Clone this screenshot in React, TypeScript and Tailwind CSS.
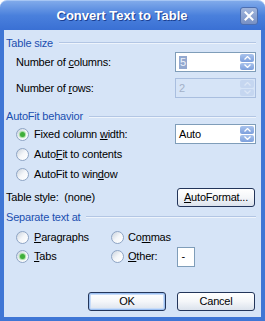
import React from 'react';

const U: React.FC<{ children: React.ReactNode }> = ({ children }) => <span className="underline underline-offset-[1px]">{children}</span>;

const GroupHeader: React.FC<{ label: string; className?: string }> = ({ label, className = '' }) => (
  <div className={`flex items-center ${className}`}>
    <span className="text-[#1b4fb0] leading-none">{label}</span>
    <div className="flex-1 ml-[6px] flex flex-col">
      <div className="h-px bg-[#b3c6e4]" />
      <div className="h-px bg-[#eef4fc]" />
    </div>
  </div>
);

const Radio: React.FC<{ checked?: boolean }> = ({ checked }) => (
  <div className="w-[13px] h-[13px] rounded-full border border-[#8ea4c4] bg-gradient-to-br from-[#c9d2dd] via-[#f4f6f9] to-white flex items-center justify-center shrink-0">
    {checked && <div className="w-[5px] h-[5px] rounded-full bg-[#3fae3a] shadow-[0_0_1px_1px_rgba(120,210,110,0.7)]" />}
  </div>
);

const Spinner: React.FC<{ disabled?: boolean }> = ({ disabled }) => {
  const bg = disabled ? 'bg-[#c5d6f0]' : 'bg-gradient-to-b from-[#a9c3ec] to-[#7c9fdc]';
  const stroke = disabled ? '#dbe6f6' : '#ffffff';
  return (
    <div className="flex flex-col w-[15px] h-full gap-px py-px pr-px">
      <div className={`flex-1 rounded-[2px] ${bg} flex items-center justify-center`}>
        <svg width="7" height="4" viewBox="0 0 7 4"><path d="M0.5 3.5 L3.5 0.5 L6.5 3.5" stroke={stroke} strokeWidth="1.3" fill="none" /></svg>
      </div>
      <div className={`flex-1 rounded-[2px] ${bg} flex items-center justify-center`}>
        <svg width="7" height="4" viewBox="0 0 7 4"><path d="M0.5 0.5 L3.5 3.5 L6.5 0.5" stroke={stroke} strokeWidth="1.3" fill="none" /></svg>
      </div>
    </div>
  );
};

const SpinBox: React.FC<{ value: React.ReactNode; disabled?: boolean }> = ({ value, disabled }) => (
  <div className={`w-[81px] h-[20px] border flex items-stretch ${disabled ? 'border-[#a9bedf] bg-[#d6e4f7] text-[#a3b1c8]' : 'border-[#7f9db9] bg-white text-black'}`}>
    <div className="flex-1 flex items-center pl-[3px]">{value}</div>
    <Spinner disabled={disabled} />
  </div>
);

const XpButton: React.FC<{ children: React.ReactNode; focused?: boolean; className?: string }> = ({ children, focused, className = '' }) => (
  <div className={`h-[19px] w-[78px] rounded-[3px] border border-[#23355a] bg-gradient-to-b from-white via-[#f4f6f9] to-[#dbe2ec] flex items-center justify-center text-black ${focused ? 'shadow-[inset_0_0_0_1px_#9cc0f2,inset_0_0_0_2px_#c8dcf8]' : ''} ${className}`}>
    {children}
  </div>
);

export default function App() {
  return (
    <div className="w-[265px] h-[321px] flex flex-col font-['Liberation_Sans',Arial,sans-serif] text-[11px] tracking-[-0.2px] text-black select-none">
      {/* title bar */}
      <div className="h-[30px] rounded-t-[7px] bg-gradient-to-b from-[#80aaea] via-[#4a80dc] to-[#3a70d4] flex items-center border-t border-[#a6c6f4] shrink-0">
        <div className="flex-1 text-center text-white font-bold text-[13px] tracking-normal pl-[4px] [text-shadow:1px_1px_0_#1b3f91]">Convert Text to Table</div>
        <div className="w-[18px] h-[18px] mr-[7px] mt-[1px] rounded-[3px] border border-[#4c6eb0] bg-gradient-to-b from-[#a2b6dc] to-[#7790c4] flex items-center justify-center">
          <svg width="10" height="10" viewBox="0 0 10 10">
            <path d="M1.5 1.5 L8.5 8.5 M8.5 1.5 L1.5 8.5" stroke="#ffffff" strokeWidth="2" strokeLinecap="square" />
          </svg>
        </div>
      </div>

      {/* body */}
      <div className="flex-1 border-x-4 border-b-4 border-[#3f76d5] bg-[#d6e4f7] pl-[2px] pr-[5px] pt-[6px] flex flex-col">
        <GroupHeader label="Table size" className="h-[14px]" />
        <div className="h-[20px] mt-[2px] flex items-center justify-between pl-[10px]">
          <span>Number of <U>c</U>olumns:</span>
          <SpinBox value={<span className="bg-[#93a8cf] text-[#eef2fa] px-px leading-[13px]">5</span>} />
        </div>
        <div className="h-[20px] mt-[6px] flex items-center justify-between pl-[10px]">
          <span>Number of <U>r</U>ows:</span>
          <SpinBox value="2" disabled />
        </div>

        <GroupHeader label="AutoFit behavior" className="h-[13px] mt-[12px]" />
        <div className="h-[20px] mt-px flex items-center justify-between pl-[10px]">
          <div className="flex items-center gap-[5px]">
            <Radio checked />
            <span>Fixed column <U>w</U>idth:</span>
          </div>
          <SpinBox value="Auto" />
        </div>
        <div className="h-[20px] flex items-center gap-[5px] pl-[10px]">
          <Radio />
          <span>Auto<U>F</U>it to contents</span>
        </div>
        <div className="h-[20px] flex items-center gap-[5px] pl-[10px]">
          <Radio />
          <span>AutoFit to win<U>d</U>ow</span>
        </div>

        <div className="h-[19px] mt-[4px] flex items-center justify-between">
          <span>Table style:&nbsp; (none)</span>
          <XpButton className="w-[77px] mr-px"><span><U>A</U>utoFormat...</span></XpButton>
        </div>

        <GroupHeader label="Separate text at" className="h-[12px] mt-[4px]" />
        <div className="mt-[5px] grid grid-cols-[95px_1fr] pl-[10px]">
          <div className="h-[19px] flex items-center gap-[5px]">
            <Radio />
            <span><U>P</U>aragraphs</span>
          </div>
          <div className="h-[19px] flex items-center gap-[4px]">
            <Radio />
            <span>Co<U>m</U>mas</span>
          </div>
          <div className="h-[19px] flex items-center gap-[5px]">
            <Radio checked />
            <span><U>T</U>abs</span>
          </div>
          <div className="h-[19px] flex items-center gap-[4px]">
            <Radio />
            <span><U>O</U>ther:</span>
            <div className="ml-[16px] w-[18px] h-[20px] border border-[#7f9db9] bg-white flex items-center pl-[3px]">-</div>
          </div>
        </div>

        <div className="mt-[26px] flex justify-end gap-[11px] pr-px">
          <XpButton focused>OK</XpButton>
          <XpButton>Cancel</XpButton>
        </div>
      </div>
    </div>
  );
}
